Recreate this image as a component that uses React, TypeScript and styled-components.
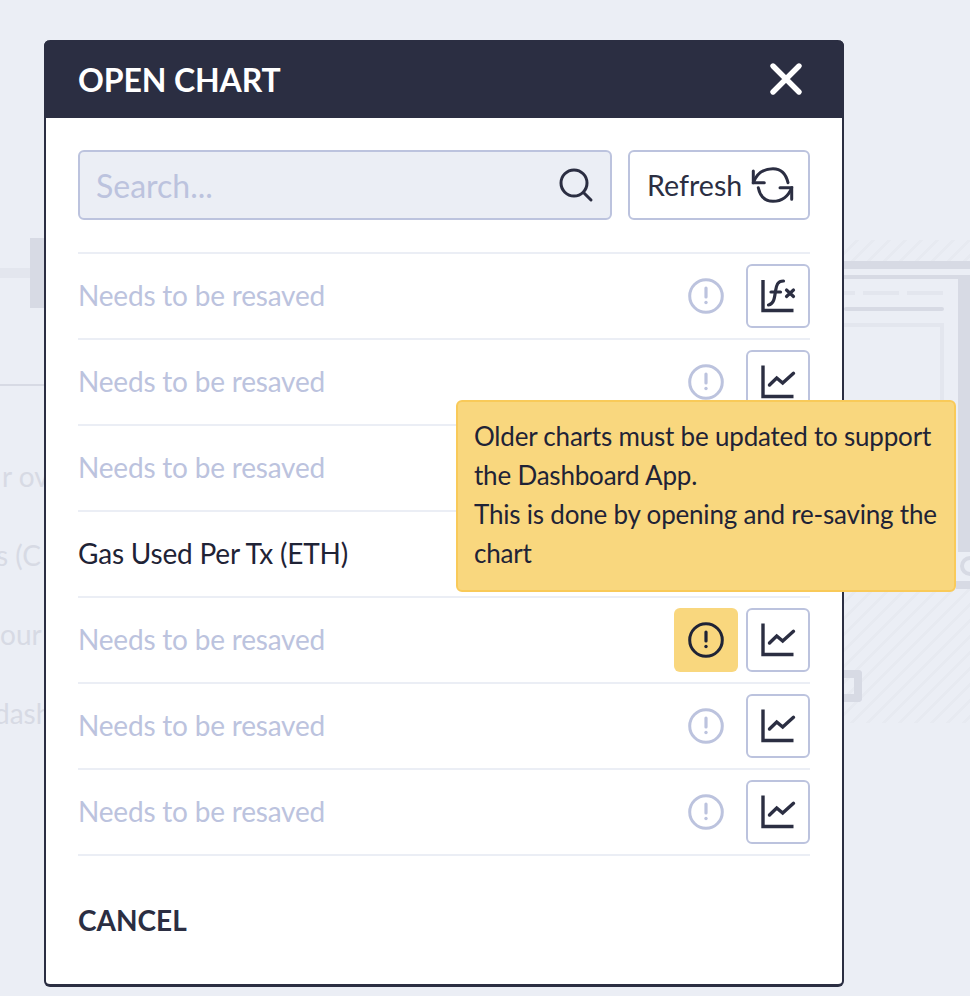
import React from 'react';
import styled, { createGlobalStyle } from 'styled-components';

const DARK = '#2b2e42';
const INK = '#1f2336';
const FAINT = '#bcc3de';
const PALE = '#ebeef5';
const GHOST = '#d7dae4';
const GHOST_SOFT = '#e3e6ee';
const HATCH = `repeating-linear-gradient(135deg, ${PALE} 0 8px, #e7eaf1 8px 11.3px)`;

const GlobalStyle = createGlobalStyle`
  html, body {
    margin: 0;
    padding: 0;
    background: ${PALE};
    font-family: Lato, "Open Sans", sans-serif;
  }
  * {
    box-sizing: border-box;
  }
`;

const Screen = styled.div`
  position: relative;
  width: 970px;
  height: 996px;
  overflow: hidden;
  padding: 40px 0 0 44px;
  background: ${PALE};
`;

/* faded page behind the modal */
const GhostPage = styled.div`
  position: absolute;
  inset: 0;
  display: flex;
  justify-content: space-between;
  overflow: hidden;
`;

const GhostLeft = styled.div`
  width: 44px;
  padding-top: 238px;
  overflow: hidden;
`;

const GhostHandle = styled.div`
  display: flex;
  align-items: center;
`;

const GhostHandleLine = styled.div`
  width: 30px;
  height: 10px;
  background: ${GHOST_SOFT};
`;

const GhostHandleBlock = styled.div`
  width: 14px;
  height: 70px;
  background: ${GHOST};
`;

const GhostRule = styled.div`
  height: 2px;
  margin-top: 76px;
  background: ${GHOST};
`;

const GhostTextList = styled.div`
  display: flex;
  flex-direction: column;
  gap: 45px;
  margin-top: 73px;
`;

const GhostText = styled.div<{ shift: number }>`
  margin-left: ${({ shift }) => shift}px;
  font-size: 28px;
  line-height: 34px;
  white-space: nowrap;
  color: ${GHOST};
`;

const GhostRight = styled.div`
  width: 126px;
  padding-top: 240px;
`;

const GhostHatch = styled.div<{ tall: number }>`
  height: ${({ tall }) => tall}px;
  background: ${HATCH};
`;

const GhostBar = styled.div<{ inset?: number }>`
  height: 8px;
  margin-left: ${({ inset = 0 }) => inset}px;
  background: ${GHOST};
`;

const GhostPanel = styled.div`
  height: 277px;
  margin-top: 6px;
  padding: 12px 14px 0 0;
  border-top: 4px solid ${GHOST};
  border-right: 12px solid ${GHOST};
`;

const GhostDashes = styled.div`
  display: flex;
  gap: 8px;
`;

const GhostDash = styled.div<{ long: number }>`
  width: ${({ long }) => long}px;
  height: 4px;
  background: ${GHOST_SOFT};
`;

const GhostLine = styled.div`
  height: 4px;
  margin-top: 12px;
  border-radius: 2px;
  background: ${GHOST};
`;

const GhostFrame = styled.div`
  height: 200px;
  margin-top: 12px;
  border-top: 4px solid ${GHOST_SOFT};
  border-right: 4px solid ${GHOST_SOFT};
`;

const GhostRing = styled.div`
  width: 20px;
  height: 20px;
  margin: 4px 0 5px 116px;
  border: 4px solid ${GHOST};
  border-radius: 50%;
`;

const GhostHatchBlock = styled(GhostHatch)`
  padding-top: 81px;
`;

const GhostSquare = styled.div`
  width: 18px;
  height: 32px;
  border: 8px solid ${GHOST};
  border-left: 0;
  border-radius: 0 4px 4px 0;
`;

/* modal */
const Modal = styled.div`
  position: relative;
  display: flex;
  flex-direction: column;
  width: 800px;
  height: 947px;
  border: solid ${DARK};
  border-width: 0 2px 3px;
  border-radius: 6px;
  background: #fff;
`;

const Header = styled.div`
  display: flex;
  align-items: center;
  justify-content: space-between;
  height: 78px;
  margin: 0 -2px;
  padding: 0 41px 0 34px;
  border-radius: 6px 6px 0 0;
  background: ${DARK};
`;

const Title = styled.div`
  font-size: 32px;
  font-weight: 700;
  letter-spacing: -0.1px;
  color: #fff;
`;

const Body = styled.div`
  flex: 1;
  padding: 32px 32px 0;
`;

const Toolbar = styled.div`
  display: flex;
  gap: 16px;
  margin-bottom: 32px;
`;

const SearchBox = styled.div`
  display: flex;
  flex: 1;
  align-items: center;
  height: 70px;
  padding: 0 16px;
  border: 2px solid ${FAINT};
  border-radius: 6px;
  background: ${PALE};
`;

const SearchInput = styled.input`
  flex: 1;
  min-width: 0;
  border: 0;
  outline: 0;
  padding: 0;
  background: transparent;
  font: 400 32px Lato, sans-serif;
  color: ${INK};

  &::placeholder {
    color: ${FAINT};
    opacity: 1;
  }
`;

const RefreshButton = styled.button`
  display: flex;
  align-items: center;
  gap: 8px;
  width: 182px;
  height: 70px;
  padding: 0 0 0 17px;
  border: 2px solid ${FAINT};
  border-radius: 6px;
  background: #fff;
  font: 400 28.6px Lato, sans-serif;
  color: ${DARK};
`;

const List = styled.div`
  border-bottom: 2px solid ${PALE};
`;

const Row = styled.div`
  display: flex;
  align-items: center;
  height: 86px;
  gap: 8px;
  border-top: 2px solid ${PALE};
`;

const RowName = styled.div<{ saved: boolean }>`
  flex: 1;
  margin-bottom: 2px;
  font-size: 28px;
  letter-spacing: -0.2px;
  color: ${({ saved }) => (saved ? INK : FAINT)};
`;

const WarningSlot = styled.div<{ active: boolean }>`
  position: relative;
  display: flex;
  align-items: center;
  justify-content: center;
  width: 64px;
  height: 64px;
  border-radius: 6px;
  background: ${({ active }) => (active ? '#f9d77e' : 'transparent')};
  color: ${({ active }) => (active ? INK : FAINT)};
`;

const Tooltip = styled.div`
  position: absolute;
  right: -218px;
  bottom: 80px;
  width: 500px;
  height: 192px;
  padding: 15px 16px;
  border: 2px solid #f9ca59;
  border-radius: 6px;
  background: #f9d77e;
  font-size: 26px;
  line-height: 39px;
  letter-spacing: -0.2px;
  white-space: nowrap;
  color: ${INK};
`;

const ChartButton = styled.button`
  display: flex;
  width: 64px;
  height: 64px;
  padding: 0;
  border: 2px solid ${FAINT};
  border-radius: 6px;
  background: #fff;
  color: ${DARK};
`;

const Footer = styled.div`
  display: flex;
  align-items: center;
  height: 128px;
  font-size: 28px;
  font-weight: 700;
  color: ${DARK};
`;

const Glyph = styled.svg`
  flex: none;
  display: block;
  fill: none;
  stroke: currentColor;
`;

const SearchIcon = () => (
  <Glyph width="36" height="36" viewBox="0 0 36 36" strokeWidth="3" strokeLinecap="round" style={{ color: DARK }}>
    <circle cx="16" cy="16" r="13" />
    <path d="M25.5 25.5 L33 33" />
  </Glyph>
);

const RefreshIcon = () => (
  <Glyph width="46" height="36" viewBox="0 0 46 36" strokeWidth="3" strokeLinecap="round" strokeLinejoin="miter">
    <path d="M3.3 4 V15.7 H14.3" />
    <path d="M3.3 15.7 C7 6 14 1.7 23 1.7 C31 1.7 36 7 38 15.7" />
    <path d="M30 20.7 H41.7 V32.3" />
    <path d="M41.7 20.7 C38 30 31 34.3 23 34.3 C15 34.3 10 29 8.3 20.7" />
  </Glyph>
);

const CloseIcon = () => (
  <Glyph width="34" height="34" viewBox="0 0 34 34" strokeWidth="5.4" strokeLinecap="round" style={{ color: '#fff' }}>
    <path d="M4 4 L30 30 M30 4 L4 30" />
  </Glyph>
);

const WarningIcon = () => (
  <Glyph width="36" height="36" viewBox="0 0 36 36" strokeWidth="3">
    <circle cx="18" cy="18" r="16.3" />
    <path d="M18 10 V19" strokeLinecap="round" strokeWidth="3.2" />
    <circle cx="18" cy="24.5" r="1.7" fill="currentColor" stroke="none" />
  </Glyph>
);

const LineChartIcon = () => (
  <Glyph width="60" height="60" viewBox="2 2 60 60" strokeWidth="3.4" strokeLinecap="round">
    <path d="M17 15.5 V46.5 H47.5" strokeLinecap="butt" />
    <path d="M23.5 35 L30.7 28 L36.7 33 L47.5 23.3" />
  </Glyph>
);

const FormulaIcon = () => (
  <Glyph width="60" height="60" viewBox="2 2 60 60" strokeWidth="3.4" strokeLinecap="round">
    <path d="M17 16 V46.5 H47.5" strokeLinecap="butt" />
    <path d="M37.5 17 C31.5 17 30.5 21 29.5 27 C28.5 34 28 40 22.5 41" strokeWidth="3.2" />
    <path d="M25 28 H34.5" strokeWidth="3.2" />
    <path d="M40.5 26 L47.5 32.5 M47.5 26 L40.5 32.5" strokeWidth="3.2" />
  </Glyph>
);

type Chart = { name: string; saved?: boolean; formula?: boolean; active?: boolean };

const CHARTS: Chart[] = [
  { name: 'Needs to be resaved', formula: true },
  { name: 'Needs to be resaved' },
  { name: 'Needs to be resaved' },
  { name: 'Gas Used Per Tx (ETH)', saved: true },
  { name: 'Needs to be resaved', active: true },
  { name: 'Needs to be resaved' },
  { name: 'Needs to be resaved' },
];

const Background = () => (
  <GhostPage>
    <GhostLeft>
      <GhostHandle>
        <GhostHandleLine />
        <GhostHandleBlock />
      </GhostHandle>
      <GhostRule />
      <GhostTextList>
        <GhostText shift={2}>r ov</GhostText>
        <GhostText shift={-4}>s (C</GhostText>
        <GhostText shift={0}>our</GhostText>
        <GhostText shift={-6}>dash</GhostText>
      </GhostTextList>
    </GhostLeft>
    <GhostRight>
      <GhostHatch tall={21} />
      <GhostBar />
      <GhostPanel>
        <GhostDashes>
          <GhostDash long={11} />
          <GhostDash long={36} />
          <GhostDash long={36} />
        </GhostDashes>
        <GhostLine />
        <GhostFrame />
      </GhostPanel>
      <GhostRing />
      <GhostBar inset={112} />
      <GhostHatchBlock tall={134}>
        <GhostSquare />
      </GhostHatchBlock>
    </GhostRight>
  </GhostPage>
);

export default function App() {
  return (
    <Screen>
      <GlobalStyle />
      <Background />
      <Modal>
        <Header>
          <Title>OPEN CHART</Title>
          <CloseIcon />
        </Header>
        <Body>
          <Toolbar>
            <SearchBox>
              <SearchInput placeholder="Search..." />
              <SearchIcon />
            </SearchBox>
            <RefreshButton>
              Refresh
              <RefreshIcon />
            </RefreshButton>
          </Toolbar>
          <List>
            {CHARTS.map((chart, i) => (
              <Row key={i}>
                <RowName saved={!!chart.saved}>{chart.name}</RowName>
                {!chart.saved && (
                  <WarningSlot active={!!chart.active}>
                    <WarningIcon />
                    {chart.active && (
                      <Tooltip>
                        Older charts must be updated to support
                        <br />
                        the Dashboard App.
                        <br />
                        This is done by opening and re-saving the
                        <br />
                        chart
                      </Tooltip>
                    )}
                  </WarningSlot>
                )}
                <ChartButton>{chart.formula ? <FormulaIcon /> : <LineChartIcon />}</ChartButton>
              </Row>
            ))}
          </List>
          <Footer>CANCEL</Footer>
        </Body>
      </Modal>
    </Screen>
  );
}
